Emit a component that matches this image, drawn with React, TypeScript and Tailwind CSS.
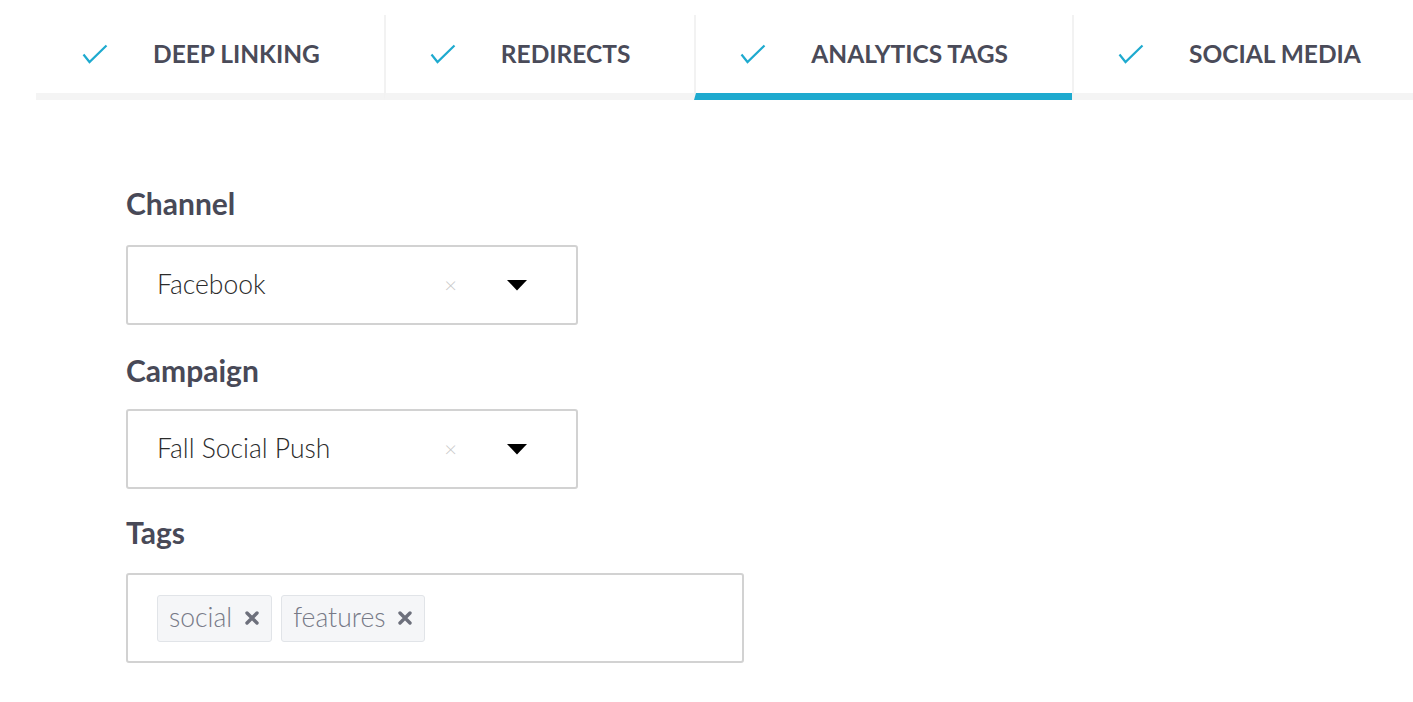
import { useState } from 'react';

const tabs = ['DEEP LINKING', 'REDIRECTS', 'ANALYTICS TAGS', 'SOCIAL MEDIA'];

function Check() {
  return (
    <svg width="26" height="20" viewBox="0 0 26 20" fill="none" className="shrink-0">
      <path d="M1.5 10.5 L7.5 18 L24.5 1.5" stroke="#1eaacf" strokeWidth="2.2" />
    </svg>
  );
}

function Caret() {
  return (
    <svg width="20" height="11" viewBox="0 0 20 11" className="shrink-0">
      <path d="M0 0 H20 L10 10.5 Z" fill="#000" />
    </svg>
  );
}

function SelectBox({ value }: { value: string }) {
  return (
    <div className="flex h-[80px] w-[452px] items-center rounded-[3px] border-2 border-[#d2d2d2] pl-[29px] pr-[49px]">
      <span className="flex-1 text-[26.5px] font-light text-[#2b2b2b]">{value}</span>
      <span className="mr-[50px] text-[22px] font-light leading-none text-[#c8c8c8]">×</span>
      <Caret />
    </div>
  );
}

function Chip({ label }: { label: string }) {
  return (
    <span className="flex h-[47px] items-center gap-[13px] rounded-[3px] border border-[#e1e4e8] bg-[#f5f6f8] pl-[11px] pr-[12px]">
      <span className="text-[26.5px] font-light text-[#777a87]">{label}</span>
      <svg width="14" height="14" viewBox="0 0 14 14">
        <path d="M2 2 L12 12 M12 2 L2 12" stroke="#6d707c" strokeWidth="3.4" strokeLinecap="round" />
      </svg>
    </span>
  );
}

function Label({ children }: { children: string }) {
  return <div className="text-[30px] font-bold leading-[36px] text-[#484957]">{children}</div>;
}

export default function App() {
  const [active, setActive] = useState(2);

  return (
    <div className="min-h-[702px] overflow-hidden bg-white font-['Lato','Open_Sans',sans-serif]">
      <div className="ml-[36px] pt-[15px]">
        <div className="flex border-b-[7px] border-[#f4f4f4]">
          {tabs.map((t, i) => (
            <button
              key={t}
              onClick={() => setActive(i)}
              className={`-mb-[7px] flex h-[85px] shrink-0 items-center gap-[45px] whitespace-nowrap pr-[64px] ${
                i > 0 ? 'border-l-2 border-l-[#f2f2f2] pl-[44px]' : 'pl-[46px]'
              } ${i === active ? 'border-b-[7px] border-b-[#1eaacf]' : 'border-b-[7px] border-b-transparent'}`}
            >
              <Check />
              <span className="text-[24.5px] font-bold text-[#4a4b59]">{t}</span>
            </button>
          ))}
        </div>
      </div>

      <div className="pl-[126px] pt-[85px]">
        <Label>Channel</Label>
        <div className="mt-[24px]">
          <SelectBox value="Facebook" />
        </div>

        <div className="mt-[27px]">
          <Label>Campaign</Label>
        </div>
        <div className="mt-[21px]">
          <SelectBox value="Fall Social Push" />
        </div>

        <div className="mt-[25px]">
          <Label>Tags</Label>
        </div>
        <div className="mt-[23px] flex h-[90px] w-[618px] items-center gap-[9px] rounded-[3px] border-2 border-[#d2d2d2] pl-[29px]">
          <Chip label="social" />
          <Chip label="features" />
        </div>
      </div>
    </div>
  );
}
